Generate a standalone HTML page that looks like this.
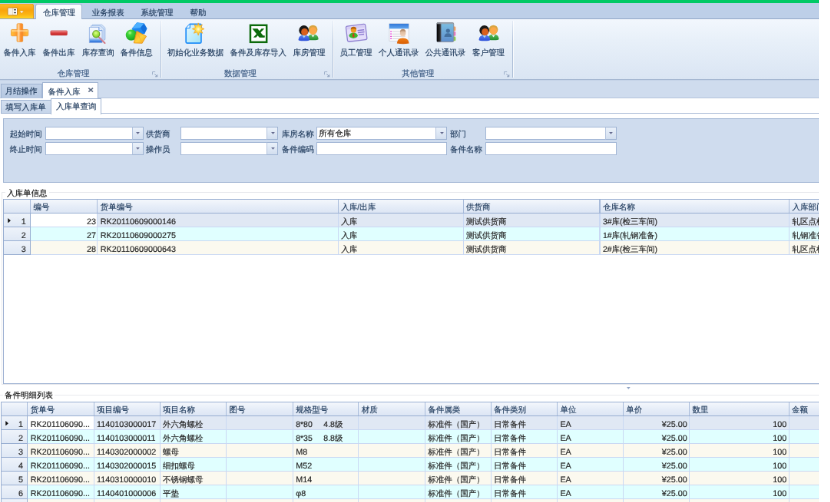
<!DOCTYPE html>
<html lang="zh"><head><meta charset="utf-8"><title>仓库管理</title>
<style>
html,body{margin:0;padding:0;background:#fff;overflow:hidden}
body{width:830px;height:502px;position:relative;font-family:"Liberation Sans",sans-serif}
#app{position:absolute;left:0;top:0;width:1066.67px;height:653.65px;overflow:hidden;transform:scale(0.768) translateZ(0);will-change:transform;transform-origin:0 0;font-size:10.5px;line-height:13px;color:#1e395b;background:#fff}
#app div,#app svg.a{position:absolute}
#app .t{white-space:pre;text-rendering:geometricPrecision;-webkit-text-stroke:.18px currentColor}
#app .c{font-size:10.8px;color:#262626}
#app .k{font-size:10.5px}
#app .j{text-align-last:justify}
</style></head><body>
<div id="app">
<section id="ribbon" aria-label="Ribbon">
<div style="left:0px;top:0px;width:1066.67px;height:23.96px;background:#bdcfe8"></div>
<div style="left:0px;top:0px;width:1066.67px;height:4.45px;background:#00c965"></div>
<div style="left:0px;top:23.83px;width:1066.67px;height:1.04px;background:#93a8c8"></div>
<div style="left:0px;top:24.87px;width:1066.67px;height:78.26px;background:linear-gradient(#f2f7fd 0%,#e8f0f9 35%,#dae5f3 100%)"></div>
<div style="left:0px;top:102.86px;width:1066.67px;height:1.17px;background:#a6b8d2"></div>
<div style="left:0px;top:104.04px;width:1066.67px;height:1.17px;background:#c4d2e6"></div>
<div style="left:0px;top:4.82px;width:44.14px;height:18.75px;background:linear-gradient(#ffb92c 0%,#f9a40c 45%,#fbb414 72%,#ffd322 100%);border-radius:0 3px 0 0;box-shadow:inset -1px 0 0 0 #e39a1c, inset 0 1px 0 0 #f0a82a"></div>
<svg class="a" style="left:9.11px;top:8.59px" width="23.44" height="11.98" viewBox="7 6.6 18 9.2"><rect x="7.900" y="7.500" width="9.500" height="7.400" rx=".7" fill="#fff" stroke="#b87a14" stroke-width=".7"/><rect x="8.300" y="7.900" width="4.300" height="6.600" fill="#f4f0e8"/><path d="M12.900 7.800v6.800" stroke="#c9b896" stroke-width=".5"/><path d="M13.900 9.500h2.300M13.900 12.400h2.300" stroke="#4a4a4a" stroke-width="1.100"/><path d="M19.500 10.500h4.500l-2.250 2.700z" fill="#fff" stroke="#d8961e" stroke-width=".5"/></svg>
<div style="left:45.83px;top:5.21px;width:61.33px;height:19.92px;background:linear-gradient(#fafcfe,#f1f6fc);border:1px solid #a3b6d2;border-bottom:none;border-radius:3px 3px 0 0;box-sizing:border-box"></div>
<div class="t j" style="left:55.99px;top:11.07px;width:42px">仓库管理</div>
<div class="t j" style="left:119.79px;top:11.07px;width:42px">业务报表</div>
<div class="t j" style="left:183.59px;top:11.07px;width:42px">系统管理</div>
<div class="t j" style="left:247.4px;top:11.07px;width:21px">帮助</div>
<div style="left:208.72px;top:26.69px;width:1.04px;height:74.22px;background:linear-gradient(rgba(170,188,214,.2),#aabcd6 40%,#aabcd6 100%)"></div>
<div style="left:209.77px;top:26.69px;width:1.04px;height:74.22px;background:rgba(255,255,255,.8)"></div>
<div style="left:432.81px;top:26.69px;width:1.04px;height:74.22px;background:linear-gradient(rgba(170,188,214,.2),#aabcd6 40%,#aabcd6 100%)"></div>
<div style="left:433.85px;top:26.69px;width:1.04px;height:74.22px;background:rgba(255,255,255,.8)"></div>
<div style="left:666.67px;top:26.69px;width:1.04px;height:74.22px;background:linear-gradient(rgba(170,188,214,.2),#aabcd6 40%,#aabcd6 100%)"></div>
<div style="left:667.71px;top:26.69px;width:1.04px;height:74.22px;background:rgba(255,255,255,.8)"></div>
<div class="t j" style="left:74.61px;top:90.1px;width:42px;color:#3b5a82">仓库管理</div>
<div class="t j" style="left:292.06px;top:90.1px;width:42px;color:#3b5a82">数据管理</div>
<div class="t j" style="left:523.18px;top:90.1px;width:42px;color:#3b5a82">其他管理</div>
<svg class="a" style="left:198.31px;top:93.23px" width="7.29" height="7.29" viewBox="0 0 7 7"><path d="M0.5 4V0.5H4" fill="none" stroke="#9aabc6" stroke-width=".9"/><path d="M3.2 3.200l3 3M6.500 4v2.500h-2.500" fill="none" stroke="#8496b4" stroke-width=".9"/></svg>
<svg class="a" style="left:422.4px;top:93.23px" width="7.29" height="7.29" viewBox="0 0 7 7"><path d="M0.5 4V0.5H4" fill="none" stroke="#9aabc6" stroke-width=".9"/><path d="M3.2 3.200l3 3M6.500 4v2.500h-2.500" fill="none" stroke="#8496b4" stroke-width=".9"/></svg>
<svg class="a" style="left:656.25px;top:93.23px" width="7.29" height="7.29" viewBox="0 0 7 7"><path d="M0.5 4V0.5H4" fill="none" stroke="#9aabc6" stroke-width=".9"/><path d="M3.2 3.200l3 3M6.500 4v2.500h-2.500" fill="none" stroke="#8496b4" stroke-width=".9"/></svg>
<div class="t j" style="left:4.39px;top:62.63px;width:42px">备件入库</div>
<div class="t j" style="left:55.56px;top:62.63px;width:42px">备件出库</div>
<div class="t j" style="left:106.87px;top:62.63px;width:42px">库存查询</div>
<div class="t j" style="left:156.74px;top:62.63px;width:42px">备件信息</div>
<div class="t j" style="left:217.81px;top:62.63px;width:73.5px">初始化业务数据</div>
<div class="t j" style="left:299.45px;top:62.63px;width:73.5px">备件及库存导入</div>
<div class="t j" style="left:381.6px;top:62.63px;width:42px">库房管理</div>
<div class="t j" style="left:442.54px;top:62.63px;width:42px">员工管理</div>
<div class="t j" style="left:492.89px;top:62.63px;width:52.5px">个人通讯录</div>
<div class="t j" style="left:553.83px;top:62.63px;width:52.5px">公共通讯录</div>
<div class="t j" style="left:615.07px;top:62.63px;width:42px">客户管理</div>
<svg class="a" style="left:11.72px;top:27.34px" width="28.65" height="31.25" viewBox="9 21 22 24"><defs><linearGradient id="gp" x1="0" y1="0" x2="1" y2="0"><stop offset="0" stop-color="#ffb050"/><stop offset=".3" stop-color="#ffd9aa"/><stop offset=".55" stop-color="#ff9a3a"/><stop offset="1" stop-color="#f58220"/></linearGradient><linearGradient id="gp2" x1="0" y1="0" x2="1" y2="0"><stop offset="0" stop-color="#ffc238"/><stop offset=".3" stop-color="#ff9c30"/><stop offset=".7" stop-color="#ff9c30"/><stop offset="1" stop-color="#ffc238"/></linearGradient></defs><rect x="10.900" y="29.800" width="17.100" height="6.400" rx=".9" fill="url(#gp2)" stroke="#f0962e" stroke-width=".6"/><rect x="16.700" y="23.900" width="5.900" height="18.100" rx=".9" fill="url(#gp)" stroke="#f0962e" stroke-width=".6"/><rect x="17.200" y="30.100" width="5" height="5.800" fill="url(#gp)"/><rect x="11.400" y="30.300" width="16.200" height="1.700" fill="#ffe9b8" opacity=".55"/></svg>
<svg class="a" style="left:62.5px;top:36.46px" width="28.65" height="13.02" viewBox="48 28 22 10"><defs><linearGradient id="gm" x1="0" y1="0" x2="0" y2="1"><stop offset="0" stop-color="#e66a6a"/><stop offset=".5" stop-color="#d63c3c"/><stop offset="1" stop-color="#c42a2a"/></linearGradient></defs><rect x="50.200" y="31" width="16.600" height="4.600" rx=".9" fill="url(#gm)" stroke="#c84444" stroke-width=".5"/><rect x="50.800" y="31.400" width="15.400" height="1.300" fill="#f29a9a" opacity=".5"/></svg>
<svg class="a" style="left:113.28px;top:28.65px" width="27.34" height="29.95" viewBox="87 22 21 23"><defs><linearGradient id="gd" x1="0" y1="0" x2="0" y2="1"><stop offset="0" stop-color="#f4f8fe"/><stop offset=".66" stop-color="#e6eefa"/><stop offset=".86" stop-color="#5a98ea"/><stop offset="1" stop-color="#1e62d0"/></linearGradient><radialGradient id="gl" cx=".45" cy=".35" r=".7"><stop offset="0" stop-color="#d8ff8a"/><stop offset=".6" stop-color="#9ee23a"/><stop offset="1" stop-color="#6cbc20"/></radialGradient></defs><path d="M92.600 24.400h9.400l3.400 3.200v11.600h-12.800z" fill="#cfe0f6" stroke="#9db9e6" stroke-width=".6"/><path d="M91.200 25.600h9.400l3.400 3.200v12h-12.800z" fill="#dde9f9" stroke="#8fb0e4" stroke-width=".6"/><path d="M89.600 27h9.600l3.200 3.200v12.200h-12.800z" fill="url(#gd)" stroke="#86a8e0" stroke-width=".6"/><path d="M99.200 27v3.200h3.200" fill="#e8f0fc" stroke="#4f86dc" stroke-width=".7"/><path d="M99.200 36.900l5.900 5.900" stroke="#cc6a78" stroke-width="1.500" stroke-linecap="round"/><path d="M99.400 36.900l5.500 5.400" stroke="#f0b0b8" stroke-width=".5"/><circle cx="96.400" cy="33.800" r="3.500" fill="url(#gl)" stroke="#5f9a28" stroke-width=".8"/></svg>
<svg class="a" style="left:161.46px;top:27.34px" width="33.85" height="32.55" viewBox="124 21 26 25"><defs><radialGradient id="gs" cx=".38" cy=".3" r=".8"><stop offset="0" stop-color="#b6ff8a"/><stop offset=".25" stop-color="#3fd43a"/><stop offset="1" stop-color="#109c18"/></radialGradient><linearGradient id="gy" x1="0" y1="0" x2="1" y2="1"><stop offset="0" stop-color="#f4a010"/><stop offset=".55" stop-color="#ffd23c"/><stop offset="1" stop-color="#f6a418"/></linearGradient></defs><path d="M137.300 23l7.100.9 2.800 4.900-2.500 5.300-10.300 0-1.900-5.300z" fill="#1c86f0" stroke="#1c86f0" stroke-width=".5" stroke-linejoin="round"/><path d="M137.300 23l7.100.9-3.600 4.300-8.300.6z" fill="#4cb0ff"/><path d="M144.400 23.900l2.800 4.900-2.500 5.300-3.900-5.900z" fill="#1470dc"/><circle cx="131.600" cy="35.300" r="5.500" fill="url(#gs)"/><path d="M137.100 31.400l9.600 5.100-4.200 7-8.300-.3z" fill="url(#gy)" stroke="#e8901a" stroke-width=".7" stroke-linejoin="round"/><path d="M137.100 31.400l5.400 12.100" stroke="#f6b030" stroke-width=".6"/></svg>
<svg class="a" style="left:238.28px;top:27.34px" width="32.55" height="32.55" viewBox="183 21 25 25"><defs><linearGradient id="gn" x1="0" y1="0" x2="1" y2="1"><stop offset="0" stop-color="#e4f7ff"/><stop offset="1" stop-color="#9fe2f6"/></linearGradient><radialGradient id="gst" cx=".5" cy=".5" r=".5"><stop offset="0" stop-color="#fffbe0"/><stop offset=".35" stop-color="#ffe45a"/><stop offset="1" stop-color="#ffae14"/></radialGradient></defs><path d="M190.200 24.300h10.200q1 0 1 1v17q0 1-1 1h-13.200q-1 0-1-1v-13.800z" fill="url(#gn)" stroke="#1e8cf8" stroke-width="1.300" stroke-linejoin="round"/><path d="M190.200 24.300v3.200q0 1-1 1h-3" fill="#e8f8ff" stroke="#1e8cf8" stroke-width=".9"/><path d="M198.500 23.200l1.100 3.100 2.900-1.500-1.100 3 3.100 1.400-3.100 1.300 1.500 3-3.200-1.100-1.200 3.300-1.200-3.300-3.200 1.100 1.500-3-3.100-1.300 3.100-1.400-1.100-3 2.900 1.500z" fill="url(#gst)" stroke="#f2a21a" stroke-width=".5" stroke-linejoin="round"/></svg>
<svg class="a" style="left:321.61px;top:28.65px" width="29.95" height="29.95" viewBox="247 22 23 23"><rect x="250.050" y="24.950" width="16.300" height="16.900" fill="#fff" stroke="#0c6a0c" stroke-width="1.900"/><path d="M252 28.300h5.300l7 8.800h-5.300z" fill="#0c6a0c"/><path d="M261.300 28.300h2.700l-8.300 8.800h-2.700z" fill="#0c6a0c"/><path d="M259.800 35.300h4.700v1.800h-4.700z" fill="#0c6a0c"/></svg>
<svg class="a" style="left:385.42px;top:28.65px" width="32.55" height="26.04" viewBox="296 22 25 20"><defs><linearGradient id="pg1" x1="0" y1="0" x2="0" y2="1"><stop offset="0" stop-color="#5fc060"/><stop offset="1" stop-color="#1f8c2c"/></linearGradient><linearGradient id="pb1" x1="0" y1="0" x2="0" y2="1"><stop offset="0" stop-color="#5a84f4"/><stop offset="1" stop-color="#2a4ed8"/></linearGradient></defs><path d="M307.9 38.900q.1-5 5.400-5t5.500 5q-.2 1-5.500 1t-5.400-1z" fill="url(#pg1)"/><path d="M311.6 34.600l1.700 2.400 1.700-2.400z" fill="#f2f6f2"/><circle cx="313.3" cy="29.300" r="4.500" fill="#d9a542"/><ellipse cx="313.4" cy="30.600" rx="3.500" ry="3.800" fill="#fba848"/><path d="M298.7 39.600q.1-5 5.600-5t5.700 5q-.2 1-5.700 1t-5.600-1z" fill="url(#pb1)"/><path d="M302.6 35.300l1.700 2.500 1.800-2.500z" fill="#a8d8f4"/><circle cx="304.2" cy="30" r="4.900" fill="#1a1a1a"/><ellipse cx="304.9" cy="31.700" rx="3.400" ry="3.600" fill="#d8601c"/></svg>
<svg class="a" style="left:446.61px;top:27.34px" width="35.16" height="32.55" viewBox="343 21 27 25"><g transform="rotate(-7 356 33.500)"><rect x="346.400" y="25.400" width="19.600" height="15.600" rx="1.600" fill="#e4defa" stroke="#8e80d0" stroke-width="1"/><rect x="347.400" y="26.400" width="17.600" height="2.400" fill="#d6cdf4"/><path d="M357.600 31h6.600M357.600 33.200h6.600M358 35.400h5.600" stroke="#8a78d0" stroke-width="1.100"/></g><ellipse cx="353.100" cy="35.800" rx="4.300" ry="2.800" fill="#3cb82c"/><path d="M352.500 33.600h1.300l.4 3.200-1 .9-1-.9z" fill="#d83018"/><circle cx="353.300" cy="30.200" r="2.800" fill="#f09a1c"/><path d="M350.500 29.800a2.800 2.800 0 0 1 5.600 0q-2.800-1.500-5.600 0z" fill="#b8640c"/></svg>
<svg class="a" style="left:502.6px;top:27.34px" width="33.85" height="32.55" viewBox="386 21 26 25"><defs><linearGradient id="gc" x1="0" y1="0" x2="0" y2="1"><stop offset="0" stop-color="#3278d8"/><stop offset="1" stop-color="#62a6ee"/></linearGradient><linearGradient id="go" x1="0" y1="0" x2="0" y2="1"><stop offset="0" stop-color="#f08018"/><stop offset="1" stop-color="#d85c00"/></linearGradient><linearGradient id="gh" x1="0" y1="0" x2="0" y2="1"><stop offset="0" stop-color="#d8b090"/><stop offset="1" stop-color="#f0d4bc"/></linearGradient></defs><rect x="389" y="24" width="19.400" height="17.400" fill="#fbfbfd" stroke="#c8ccd8" stroke-width=".6"/><rect x="389" y="24" width="19.400" height="5" fill="url(#gc)"/><path d="M392 31.800h13M392 34.200h13M392 36.600h13M392 39h13" stroke="#d2d4da" stroke-width=".8"/><path d="M390 31.800h1.400M390 34.200h1.400M390 36.600h1.400M390 39h1.400" stroke="#e838d8" stroke-width="1"/><path d="M396.600 43.600q.2-5.400 6-5.400t6.200 5.400q-6 1.200-12.200 0z" fill="url(#go)"/><ellipse cx="402.600" cy="33.200" rx="2.900" ry="3.400" fill="url(#gh)"/><path d="M399.700 32.200q.3-3 2.900-3t2.900 3q-2.900-1.500-5.800 0z" fill="#b89070"/></svg>
<svg class="a" style="left:566.41px;top:27.34px" width="31.25" height="31.25" viewBox="435 21 24 24"><defs><linearGradient id="gb" x1="0" y1="0" x2="0" y2="1"><stop offset="0" stop-color="#7cc0e2"/><stop offset="1" stop-color="#5e8ecc"/></linearGradient><linearGradient id="gsp" x1="0" y1="0" x2="1" y2="0"><stop offset="0" stop-color="#050505"/><stop offset=".7" stop-color="#2c2c2e"/><stop offset="1" stop-color="#5c6068"/></linearGradient></defs><rect x="453" y="26.800" width="3" height="4.400" rx="1" fill="#f0a060"/><rect x="453" y="31.800" width="3" height="4.400" rx="1" fill="#e878c0"/><rect x="453" y="36.800" width="3" height="4.400" rx="1" fill="#8ccc50"/><rect x="437" y="22.900" width="17" height="19.300" rx="1.200" fill="url(#gb)" stroke="#8a8e98" stroke-width=".7"/><rect x="437.300" y="23.200" width="4.200" height="18.700" fill="url(#gsp)"/><rect x="437.300" y="23" width="16.500" height="1.300" fill="#9aa0a8" opacity=".85"/><circle cx="448.300" cy="31" r="2" fill="#44709e"/><path d="M444.600 37.200q.3-3.800 3.700-3.800t3.700 3.800z" fill="#44709e"/></svg>
<svg class="a" style="left:619.53px;top:28.65px" width="32.55" height="26.04" viewBox="475.8 22 25.0 20"><defs><linearGradient id="pg2" x1="0" y1="0" x2="0" y2="1"><stop offset="0" stop-color="#5fc060"/><stop offset="1" stop-color="#1f8c2c"/></linearGradient><linearGradient id="pb2" x1="0" y1="0" x2="0" y2="1"><stop offset="0" stop-color="#5a84f4"/><stop offset="1" stop-color="#2a4ed8"/></linearGradient></defs><path d="M487.7 38.900q.1-5 5.400-5t5.500 5q-.2 1-5.500 1t-5.400-1z" fill="url(#pg2)"/><path d="M491.4 34.600l1.700 2.400 1.700-2.400z" fill="#f2f6f2"/><circle cx="493.1" cy="29.300" r="4.500" fill="#d9a542"/><ellipse cx="493.2" cy="30.600" rx="3.500" ry="3.800" fill="#fba848"/><path d="M478.5 39.600q.1-5 5.600-5t5.700 5q-.2 1-5.700 1t-5.600-1z" fill="url(#pb2)"/><path d="M482.4 35.300l1.700 2.500 1.800-2.500z" fill="#a8d8f4"/><circle cx="484.0" cy="30" r="4.900" fill="#1a1a1a"/><ellipse cx="484.7" cy="31.700" rx="3.400" ry="3.600" fill="#d8601c"/></svg>
</section>
<section id="doc-tabs" aria-label="Document tabs">
<div style="left:0px;top:104.95px;width:1066.67px;height:22.14px;background:#cfdcee"></div>
<div style="left:0px;top:126.69px;width:1066.67px;height:1.04px;background:#b4c4dc"></div>
<div style="left:0px;top:127.73px;width:1066.67px;height:1.04px;background:#dde5f0"></div>
<div style="left:0px;top:128.12px;width:1066.67px;height:28.12px;background:#fff"></div>
<div style="left:1.3px;top:109.38px;width:54.17px;height:18.23px;background:linear-gradient(#c2d2e8,#b5c7e1);border:1px solid #a0b4d2;border-bottom:none;box-sizing:border-box"></div>
<div class="t j" style="left:6.51px;top:112.76px;width:42px">月结操作</div>
<div style="left:54.69px;top:107.03px;width:73.18px;height:21.35px;background:#fff;border:1px solid #a0b4d2;border-bottom:none;box-sizing:border-box"></div>
<div class="t j" style="left:62.5px;top:113.54px;width:42px">备件入库</div>
<svg class="a" style="left:113.67px;top:113.8px" width="8.33" height="6.25" viewBox="0 0 8 7"><path d="M0.800 0.800L7.200 6.200M7.200 0.800L0.800 6.200" stroke="#5a6982" stroke-width="1.800" fill="none"/></svg>
<div style="left:131.51px;top:147.14px;width:935.16px;height:1.04px;background:#a9bbd6"></div>
<div style="left:1.3px;top:130.47px;width:65.89px;height:17.71px;background:linear-gradient(#d3dfef,#c6d5ea);border:1px solid #a0b4d2;box-sizing:border-box"></div>
<div class="t j" style="left:7.29px;top:133.59px;width:52.5px">填写入库单</div>
<div style="left:66.41px;top:128.39px;width:65.89px;height:20.57px;background:#fff;border:1px solid #a0b4d2;border-bottom:none;box-sizing:border-box"></div>
<div class="t j" style="left:72.92px;top:132.55px;width:52.5px">入库单查询</div>
</section>
<section id="filter" aria-label="Query filter">
<div style="left:4.17px;top:154.43px;width:1067.71px;height:83.98px;background:#cfdcee;border:1px solid #a3b7d4;box-sizing:border-box"></div>
<div class="t j" style="left:12.76px;top:168.88px;width:42px">起始时间</div>
<div class="t j" style="left:190.1px;top:168.88px;width:31.5px">供货商</div>
<div class="t j" style="left:366.67px;top:168.88px;width:42px">库房名称</div>
<div class="t j" style="left:585.94px;top:168.88px;width:21px">部门</div>
<div class="t j" style="left:12.76px;top:188.93px;width:42px">终止时间</div>
<div class="t j" style="left:190.1px;top:188.93px;width:31.5px">操作员</div>
<div class="t j" style="left:366.67px;top:188.93px;width:42px">备件编码</div>
<div class="t j" style="left:585.94px;top:188.93px;width:42px">备件名称</div>
<div style="left:58.85px;top:165.36px;width:127.73px;height:16.54px;background:#fff;border:1px solid #a2b6d5;box-sizing:border-box"></div>
<div style="left:171.61px;top:165.36px;width:14.97px;height:16.54px;background:linear-gradient(#eaf1fa,#d2deef);border:1px solid #9db2d2;border-left-color:#b3c4de;box-sizing:border-box"></div>
<svg class="a" style="left:177.21px;top:172.07px" width="4.95" height="2.73" viewBox="0 0 6 3.4"><path d="M0 0h6L3 3.4z" fill="#666c90"/></svg>
<div style="left:235.16px;top:165.36px;width:127.08px;height:16.54px;background:#fff;border:1px solid #a2b6d5;box-sizing:border-box"></div>
<div style="left:347.27px;top:165.36px;width:14.97px;height:16.54px;background:linear-gradient(#eaf1fa,#d2deef);border:1px solid #9db2d2;border-left-color:#b3c4de;box-sizing:border-box"></div>
<svg class="a" style="left:352.86px;top:172.07px" width="4.95" height="2.73" viewBox="0 0 6 3.4"><path d="M0 0h6L3 3.4z" fill="#666c90"/></svg>
<div style="left:411.98px;top:165.36px;width:170.31px;height:16.54px;background:#fff;border:1px solid #a2b6d5;box-sizing:border-box"></div>
<div style="left:567.32px;top:165.36px;width:14.97px;height:16.54px;background:linear-gradient(#eaf1fa,#d2deef);border:1px solid #9db2d2;border-left-color:#b3c4de;box-sizing:border-box"></div>
<svg class="a" style="left:572.92px;top:172.07px" width="4.95" height="2.73" viewBox="0 0 6 3.4"><path d="M0 0h6L3 3.4z" fill="#666c90"/></svg>
<div class="t j" style="left:415.36px;top:167.97px;width:42px;color:#111">所有仓库</div>
<div style="left:631.77px;top:165.36px;width:171.09px;height:16.54px;background:#fff;border:1px solid #a2b6d5;box-sizing:border-box"></div>
<div style="left:787.89px;top:165.36px;width:14.97px;height:16.54px;background:linear-gradient(#eaf1fa,#d2deef);border:1px solid #9db2d2;border-left-color:#b3c4de;box-sizing:border-box"></div>
<svg class="a" style="left:793.49px;top:172.07px" width="4.95" height="2.73" viewBox="0 0 6 3.4"><path d="M0 0h6L3 3.4z" fill="#666c90"/></svg>
<div style="left:58.85px;top:185.42px;width:127.73px;height:16.8px;background:#fff;border:1px solid #a2b6d5;box-sizing:border-box"></div>
<div style="left:171.61px;top:185.42px;width:14.97px;height:16.8px;background:linear-gradient(#eaf1fa,#d2deef);border:1px solid #9db2d2;border-left-color:#b3c4de;box-sizing:border-box"></div>
<svg class="a" style="left:177.21px;top:192.25px" width="4.95" height="2.73" viewBox="0 0 6 3.4"><path d="M0 0h6L3 3.4z" fill="#666c90"/></svg>
<div style="left:235.16px;top:185.42px;width:127.08px;height:16.8px;background:#fff;border:1px solid #a2b6d5;box-sizing:border-box"></div>
<div style="left:347.27px;top:185.42px;width:14.97px;height:16.8px;background:linear-gradient(#eaf1fa,#d2deef);border:1px solid #9db2d2;border-left-color:#b3c4de;box-sizing:border-box"></div>
<svg class="a" style="left:352.86px;top:192.25px" width="4.95" height="2.73" viewBox="0 0 6 3.4"><path d="M0 0h6L3 3.4z" fill="#666c90"/></svg>
<div style="left:411.98px;top:185.42px;width:170.31px;height:16.8px;background:#fff;border:1px solid #a2b6d5;box-sizing:border-box"></div>
<div style="left:631.77px;top:185.42px;width:171.09px;height:16.8px;background:#fff;border:1px solid #a2b6d5;box-sizing:border-box"></div>
</section>
<section id="grid-orders" aria-label="入库单信息">
<div style="left:2.47px;top:250px;width:1069.4px;height:251.3px;border:1px solid #e6e8ec;box-sizing:border-box"></div>
<div class="t j" style="left:7.03px;top:245.57px;width:52.5px;background:#fff;padding:0 2px;color:#111">入库单信息</div>
<div style="left:4.49px;top:259.38px;width:1067.38px;height:240.49px;background:#fff;border:1px solid #9db1d2;box-sizing:border-box"></div>
<div style="left:4.49px;top:259.38px;width:1067.38px;height:19.01px;background:linear-gradient(#f4f7fc 0%,#e6edf8 50%,#dde6f4 100%);border:1px solid #97add1;box-sizing:border-box"></div>
<div style="left:39.06px;top:260.42px;width:1.04px;height:16.93px;background:#a8bbda"></div>
<div style="left:126.3px;top:260.42px;width:1.04px;height:16.93px;background:#a8bbda"></div>
<div style="left:439.84px;top:260.42px;width:1.04px;height:16.93px;background:#a8bbda"></div>
<div style="left:602.6px;top:260.42px;width:1.04px;height:16.93px;background:#a8bbda"></div>
<div style="left:780.47px;top:260.42px;width:1.04px;height:16.93px;background:#a8bbda"></div>
<div style="left:1027.08px;top:260.42px;width:1.04px;height:16.93px;background:#a8bbda"></div>
<div class="t j" style="left:43.49px;top:264.19px;width:21px">编号</div>
<div class="t j" style="left:130.73px;top:264.19px;width:42px">货单编号</div>
<div class="t" style="left:444.27px;top:264.19px;">入库/出库</div>
<div class="t j" style="left:607.03px;top:264.19px;width:31.5px">供货商</div>
<div class="t j" style="left:784.9px;top:264.19px;width:42px">仓库名称</div>
<div class="t j" style="left:1031.51px;top:264.19px;width:42px">入库部门</div>
<div style="left:39.58px;top:277.86px;width:1032.29px;height:18px;background:#e0e8f4"></div>
<div style="left:40.1px;top:278.39px;width:86.2px;height:16.96px;background:#fff"></div>
<div style="left:4.49px;top:277.34px;width:35.61px;height:19.04px;background:linear-gradient(#eef3fa,#dfe8f5);border:1px solid #97add1;box-sizing:border-box"></div>
<svg class="a" style="left:9.83px;top:283.72px" width="4.17" height="6.51" viewBox="0 0 4 7"><path d="M0 0L4 3.5L0 7z" fill="#111"/></svg>
<div class="t c" style="left:5.01px;top:282.94px;width:28.84px;text-align:right">1</div>
<div class="t c" style="left:39.58px;top:282.94px;width:85.55px;text-align:right">23</div>
<div class="t c" style="left:130.73px;top:282.94px;width:308.33px;overflow:hidden">RK20110609000146</div>
<div class="t c k j" style="left:444.27px;top:282.94px;width:21px">入库</div>
<div class="t c k j" style="left:607.03px;top:282.94px;width:52.5px">测试供货商</div>
<div class="t c k" style="left:784.9px;top:282.94px;width:241.41px;overflow:hidden">3#库(检三车间)</div>
<div class="t c k j" style="left:1031.51px;top:282.94px;width:42px">轧区点检</div>
<div style="left:40.1px;top:295.34px;width:1031.77px;height:1.04px;background:#c9d8f3"></div>
<div style="left:39.58px;top:295.86px;width:1032.29px;height:18px;background:#e0ffff"></div>
<div style="left:4.49px;top:295.34px;width:35.61px;height:19.04px;background:linear-gradient(#eef3fa,#dfe8f5);border:1px solid #97add1;box-sizing:border-box"></div>
<div class="t c" style="left:5.01px;top:300.94px;width:28.84px;text-align:right">2</div>
<div class="t c" style="left:39.58px;top:300.94px;width:85.55px;text-align:right">27</div>
<div class="t c" style="left:130.73px;top:300.94px;width:308.33px;overflow:hidden">RK20110609000275</div>
<div class="t c k j" style="left:444.27px;top:300.94px;width:21px">入库</div>
<div class="t c k j" style="left:607.03px;top:300.94px;width:52.5px">测试供货商</div>
<div class="t c k" style="left:784.9px;top:300.94px;width:241.41px;overflow:hidden">1#库(轧钢准备)</div>
<div class="t c k j" style="left:1031.51px;top:300.94px;width:42px">轧钢准备</div>
<div style="left:40.1px;top:313.34px;width:1031.77px;height:1.04px;background:#c9d8f3"></div>
<div style="left:39.58px;top:313.86px;width:1032.29px;height:18px;background:#fbf9ef"></div>
<div style="left:4.49px;top:313.34px;width:35.61px;height:19.04px;background:linear-gradient(#eef3fa,#dfe8f5);border:1px solid #97add1;box-sizing:border-box"></div>
<div class="t c" style="left:5.01px;top:318.94px;width:28.84px;text-align:right">3</div>
<div class="t c" style="left:39.58px;top:318.94px;width:85.55px;text-align:right">28</div>
<div class="t c" style="left:130.73px;top:318.94px;width:308.33px;overflow:hidden">RK20110609000643</div>
<div class="t c k j" style="left:444.27px;top:318.94px;width:21px">入库</div>
<div class="t c k j" style="left:607.03px;top:318.94px;width:52.5px">测试供货商</div>
<div class="t c k" style="left:784.9px;top:318.94px;width:241.41px;overflow:hidden">2#库(检三车间)</div>
<div class="t c k j" style="left:1031.51px;top:318.94px;width:42px">轧区点检</div>
<div style="left:40.1px;top:331.34px;width:1031.77px;height:1.04px;background:#c9d8f3"></div>
<div style="left:126.3px;top:278.39px;width:1.04px;height:54px;background:#c9d8f3"></div>
<div style="left:439.84px;top:278.39px;width:1.04px;height:54px;background:#c9d8f3"></div>
<div style="left:602.6px;top:278.39px;width:1.04px;height:54px;background:#c9d8f3"></div>
<div style="left:780.47px;top:278.39px;width:1.04px;height:54px;background:#c9d8f3"></div>
<div style="left:1027.08px;top:278.39px;width:1.04px;height:54px;background:#c9d8f3"></div>
</section>
<section id="grid-details" aria-label="备件明细列表">
<svg class="a" style="left:815.89px;top:504.17px" width="4.69" height="2.86" viewBox="0 0 5 3"><path d="M0 0h5L2.5 3z" fill="#8fa3c4"/></svg>
<div style="left:0px;top:514.19px;width:1071.88px;height:1.04px;background:#e9eaee"></div>
<div class="t j" style="left:3.91px;top:509.11px;width:63px;background:#fff;padding:0 2px;color:#111">备件明细列表</div>
<div style="left:1.37px;top:523.44px;width:1070.51px;height:154.17px;background:#fff;border:1px solid #9db1d2;box-sizing:border-box"></div>
<div style="left:1.37px;top:523.44px;width:1070.51px;height:19.01px;background:linear-gradient(#f4f7fc 0%,#e6edf8 50%,#dde6f4 100%);border:1px solid #97add1;box-sizing:border-box"></div>
<div style="left:35.29px;top:524.48px;width:1.04px;height:16.93px;background:#a8bbda"></div>
<div style="left:121.61px;top:524.48px;width:1.04px;height:16.93px;background:#a8bbda"></div>
<div style="left:207.55px;top:524.48px;width:1.04px;height:16.93px;background:#a8bbda"></div>
<div style="left:294.01px;top:524.48px;width:1.04px;height:16.93px;background:#a8bbda"></div>
<div style="left:380.73px;top:524.48px;width:1.04px;height:16.93px;background:#a8bbda"></div>
<div style="left:466.41px;top:524.48px;width:1.04px;height:16.93px;background:#a8bbda"></div>
<div style="left:552.86px;top:524.48px;width:1.04px;height:16.93px;background:#a8bbda"></div>
<div style="left:638.54px;top:524.48px;width:1.04px;height:16.93px;background:#a8bbda"></div>
<div style="left:725px;top:524.48px;width:1.04px;height:16.93px;background:#a8bbda"></div>
<div style="left:810.94px;top:524.48px;width:1.04px;height:16.93px;background:#a8bbda"></div>
<div style="left:897.14px;top:524.48px;width:1.04px;height:16.93px;background:#a8bbda"></div>
<div style="left:1026.56px;top:524.48px;width:1.04px;height:16.93px;background:#a8bbda"></div>
<div class="t j" style="left:39.71px;top:528.26px;width:31.5px">货单号</div>
<div class="t j" style="left:126.04px;top:528.26px;width:42px">项目编号</div>
<div class="t j" style="left:211.98px;top:528.26px;width:42px">项目名称</div>
<div class="t j" style="left:298.44px;top:528.26px;width:21px">图号</div>
<div class="t j" style="left:385.16px;top:528.26px;width:42px">规格型号</div>
<div class="t j" style="left:470.83px;top:528.26px;width:21px">材质</div>
<div class="t j" style="left:557.29px;top:528.26px;width:42px">备件属类</div>
<div class="t j" style="left:642.97px;top:528.26px;width:42px">备件类别</div>
<div class="t j" style="left:729.43px;top:528.26px;width:21px">单位</div>
<div class="t j" style="left:815.36px;top:528.26px;width:21px">单价</div>
<div class="t j" style="left:901.56px;top:528.26px;width:21px">数里</div>
<div class="t j" style="left:1030.99px;top:528.26px;width:21px">金额</div>
<div style="left:35.81px;top:541.93px;width:1036.07px;height:18px;background:#e0e8f4"></div>
<div style="left:36.33px;top:542.45px;width:85.29px;height:16.96px;background:#fff"></div>
<div style="left:1.37px;top:541.41px;width:34.96px;height:19.04px;background:linear-gradient(#eef3fa,#dfe8f5);border:1px solid #97add1;box-sizing:border-box"></div>
<svg class="a" style="left:6.71px;top:547.79px" width="4.17" height="6.51" viewBox="0 0 4 7"><path d="M0 0L4 3.5L0 7z" fill="#111"/></svg>
<div class="t c" style="left:1.89px;top:547.01px;width:28.19px;text-align:right">1</div>
<div class="t c" style="left:39.71px;top:547.01px;width:81.12px;overflow:hidden">RK201106090...</div>
<div class="t c" style="left:126.04px;top:547.01px;width:80.73px;overflow:hidden">1140103000017</div>
<div class="t c k j" style="left:211.98px;top:547.01px;width:52.5px">外六角螺栓</div>
<div class="t c k" style="left:385.16px;top:547.01px;width:80.47px;overflow:hidden">8*80     4.8级</div>
<div class="t c k j" style="left:557.29px;top:547.01px;width:73.5px">标准件（国产）</div>
<div class="t c k j" style="left:642.97px;top:547.01px;width:42px">日常备件</div>
<div class="t c" style="left:729.43px;top:547.01px;width:80.73px;overflow:hidden">EA</div>
<div class="t c" style="left:811.46px;top:547.01px;width:83.33px;text-align:right">¥25.00</div>
<div class="t c" style="left:897.66px;top:547.01px;width:126.56px;text-align:right">100</div>
<div style="left:36.33px;top:559.41px;width:1035.55px;height:1.04px;background:#c9d8f3"></div>
<div style="left:35.81px;top:559.93px;width:1036.07px;height:18px;background:#e0ffff"></div>
<div style="left:1.37px;top:559.41px;width:34.96px;height:19.04px;background:linear-gradient(#eef3fa,#dfe8f5);border:1px solid #97add1;box-sizing:border-box"></div>
<div class="t c" style="left:1.89px;top:565.01px;width:28.19px;text-align:right">2</div>
<div class="t c" style="left:39.71px;top:565.01px;width:81.12px;overflow:hidden">RK201106090...</div>
<div class="t c" style="left:126.04px;top:565.01px;width:80.73px;overflow:hidden">1140103000011</div>
<div class="t c k j" style="left:211.98px;top:565.01px;width:52.5px">外六角螺栓</div>
<div class="t c k" style="left:385.16px;top:565.01px;width:80.47px;overflow:hidden">8*35     8.8级</div>
<div class="t c k j" style="left:557.29px;top:565.01px;width:73.5px">标准件（国产）</div>
<div class="t c k j" style="left:642.97px;top:565.01px;width:42px">日常备件</div>
<div class="t c" style="left:729.43px;top:565.01px;width:80.73px;overflow:hidden">EA</div>
<div class="t c" style="left:811.46px;top:565.01px;width:83.33px;text-align:right">¥25.00</div>
<div class="t c" style="left:897.66px;top:565.01px;width:126.56px;text-align:right">100</div>
<div style="left:36.33px;top:577.41px;width:1035.55px;height:1.04px;background:#c9d8f3"></div>
<div style="left:35.81px;top:577.93px;width:1036.07px;height:18px;background:#fbf9ef"></div>
<div style="left:1.37px;top:577.41px;width:34.96px;height:19.04px;background:linear-gradient(#eef3fa,#dfe8f5);border:1px solid #97add1;box-sizing:border-box"></div>
<div class="t c" style="left:1.89px;top:583.01px;width:28.19px;text-align:right">3</div>
<div class="t c" style="left:39.71px;top:583.01px;width:81.12px;overflow:hidden">RK201106090...</div>
<div class="t c" style="left:126.04px;top:583.01px;width:80.73px;overflow:hidden">1140302000002</div>
<div class="t c k j" style="left:211.98px;top:583.01px;width:21px">螺母</div>
<div class="t c" style="left:385.16px;top:583.01px;width:80.47px;overflow:hidden">M8</div>
<div class="t c k j" style="left:557.29px;top:583.01px;width:73.5px">标准件（国产）</div>
<div class="t c k j" style="left:642.97px;top:583.01px;width:42px">日常备件</div>
<div class="t c" style="left:729.43px;top:583.01px;width:80.73px;overflow:hidden">EA</div>
<div class="t c" style="left:811.46px;top:583.01px;width:83.33px;text-align:right">¥25.00</div>
<div class="t c" style="left:897.66px;top:583.01px;width:126.56px;text-align:right">100</div>
<div style="left:36.33px;top:595.41px;width:1035.55px;height:1.04px;background:#c9d8f3"></div>
<div style="left:35.81px;top:595.93px;width:1036.07px;height:18px;background:#e0ffff"></div>
<div style="left:1.37px;top:595.41px;width:34.96px;height:19.04px;background:linear-gradient(#eef3fa,#dfe8f5);border:1px solid #97add1;box-sizing:border-box"></div>
<div class="t c" style="left:1.89px;top:601.01px;width:28.19px;text-align:right">4</div>
<div class="t c" style="left:39.71px;top:601.01px;width:81.12px;overflow:hidden">RK201106090...</div>
<div class="t c" style="left:126.04px;top:601.01px;width:80.73px;overflow:hidden">1140302000015</div>
<div class="t c k j" style="left:211.98px;top:601.01px;width:42px">细扣螺母</div>
<div class="t c" style="left:385.16px;top:601.01px;width:80.47px;overflow:hidden">M52</div>
<div class="t c k j" style="left:557.29px;top:601.01px;width:73.5px">标准件（国产）</div>
<div class="t c k j" style="left:642.97px;top:601.01px;width:42px">日常备件</div>
<div class="t c" style="left:729.43px;top:601.01px;width:80.73px;overflow:hidden">EA</div>
<div class="t c" style="left:811.46px;top:601.01px;width:83.33px;text-align:right">¥25.00</div>
<div class="t c" style="left:897.66px;top:601.01px;width:126.56px;text-align:right">100</div>
<div style="left:36.33px;top:613.41px;width:1035.55px;height:1.04px;background:#c9d8f3"></div>
<div style="left:35.81px;top:613.93px;width:1036.07px;height:18px;background:#fbf9ef"></div>
<div style="left:1.37px;top:613.41px;width:34.96px;height:19.04px;background:linear-gradient(#eef3fa,#dfe8f5);border:1px solid #97add1;box-sizing:border-box"></div>
<div class="t c" style="left:1.89px;top:619.01px;width:28.19px;text-align:right">5</div>
<div class="t c" style="left:39.71px;top:619.01px;width:81.12px;overflow:hidden">RK201106090...</div>
<div class="t c" style="left:126.04px;top:619.01px;width:80.73px;overflow:hidden">1140310000010</div>
<div class="t c k j" style="left:211.98px;top:619.01px;width:52.5px">不锈钢螺母</div>
<div class="t c" style="left:385.16px;top:619.01px;width:80.47px;overflow:hidden">M14</div>
<div class="t c k j" style="left:557.29px;top:619.01px;width:73.5px">标准件（国产）</div>
<div class="t c k j" style="left:642.97px;top:619.01px;width:42px">日常备件</div>
<div class="t c" style="left:729.43px;top:619.01px;width:80.73px;overflow:hidden">EA</div>
<div class="t c" style="left:811.46px;top:619.01px;width:83.33px;text-align:right">¥25.00</div>
<div class="t c" style="left:897.66px;top:619.01px;width:126.56px;text-align:right">100</div>
<div style="left:36.33px;top:631.41px;width:1035.55px;height:1.04px;background:#c9d8f3"></div>
<div style="left:35.81px;top:631.93px;width:1036.07px;height:18px;background:#e0ffff"></div>
<div style="left:1.37px;top:631.41px;width:34.96px;height:19.04px;background:linear-gradient(#eef3fa,#dfe8f5);border:1px solid #97add1;box-sizing:border-box"></div>
<div class="t c" style="left:1.89px;top:637.01px;width:28.19px;text-align:right">6</div>
<div class="t c" style="left:39.71px;top:637.01px;width:81.12px;overflow:hidden">RK201106090...</div>
<div class="t c" style="left:126.04px;top:637.01px;width:80.73px;overflow:hidden">1140401000006</div>
<div class="t c k j" style="left:211.98px;top:637.01px;width:21px">平垫</div>
<div class="t c" style="left:385.16px;top:637.01px;width:80.47px;overflow:hidden">φ8</div>
<div class="t c k j" style="left:557.29px;top:637.01px;width:73.5px">标准件（国产）</div>
<div class="t c k j" style="left:642.97px;top:637.01px;width:42px">日常备件</div>
<div class="t c" style="left:729.43px;top:637.01px;width:80.73px;overflow:hidden">EA</div>
<div class="t c" style="left:811.46px;top:637.01px;width:83.33px;text-align:right">¥25.00</div>
<div class="t c" style="left:897.66px;top:637.01px;width:126.56px;text-align:right">100</div>
<div style="left:36.33px;top:649.41px;width:1035.55px;height:1.04px;background:#c9d8f3"></div>
<div style="left:35.81px;top:649.93px;width:1036.07px;height:18px;background:#fbf9ef"></div>
<div style="left:1.37px;top:649.41px;width:34.96px;height:19.04px;background:linear-gradient(#eef3fa,#dfe8f5);border:1px solid #97add1;box-sizing:border-box"></div>
<div class="t c" style="left:1.89px;top:655.01px;width:28.19px;text-align:right">7</div>
<div class="t c" style="left:39.71px;top:655.01px;width:81.12px;overflow:hidden">RK201106090...</div>
<div class="t c" style="left:126.04px;top:655.01px;width:80.73px;overflow:hidden">1140401000007</div>
<div class="t c k j" style="left:211.98px;top:655.01px;width:21px">平垫</div>
<div class="t c" style="left:385.16px;top:655.01px;width:80.47px;overflow:hidden">φ10</div>
<div class="t c k j" style="left:557.29px;top:655.01px;width:73.5px">标准件（国产）</div>
<div class="t c k j" style="left:642.97px;top:655.01px;width:42px">日常备件</div>
<div class="t c" style="left:729.43px;top:655.01px;width:80.73px;overflow:hidden">EA</div>
<div class="t c" style="left:811.46px;top:655.01px;width:83.33px;text-align:right">¥25.00</div>
<div class="t c" style="left:897.66px;top:655.01px;width:126.56px;text-align:right">100</div>
<div style="left:36.33px;top:667.41px;width:1035.55px;height:1.04px;background:#c9d8f3"></div>
<div style="left:121.61px;top:542.45px;width:1.04px;height:126px;background:#c9d8f3"></div>
<div style="left:207.55px;top:542.45px;width:1.04px;height:126px;background:#c9d8f3"></div>
<div style="left:294.01px;top:542.45px;width:1.04px;height:126px;background:#c9d8f3"></div>
<div style="left:380.73px;top:542.45px;width:1.04px;height:126px;background:#c9d8f3"></div>
<div style="left:466.41px;top:542.45px;width:1.04px;height:126px;background:#c9d8f3"></div>
<div style="left:552.86px;top:542.45px;width:1.04px;height:126px;background:#c9d8f3"></div>
<div style="left:638.54px;top:542.45px;width:1.04px;height:126px;background:#c9d8f3"></div>
<div style="left:725px;top:542.45px;width:1.04px;height:126px;background:#c9d8f3"></div>
<div style="left:810.94px;top:542.45px;width:1.04px;height:126px;background:#c9d8f3"></div>
<div style="left:897.14px;top:542.45px;width:1.04px;height:126px;background:#c9d8f3"></div>
<div style="left:1026.56px;top:542.45px;width:1.04px;height:126px;background:#c9d8f3"></div>
</section>
</div>
</body></html>
